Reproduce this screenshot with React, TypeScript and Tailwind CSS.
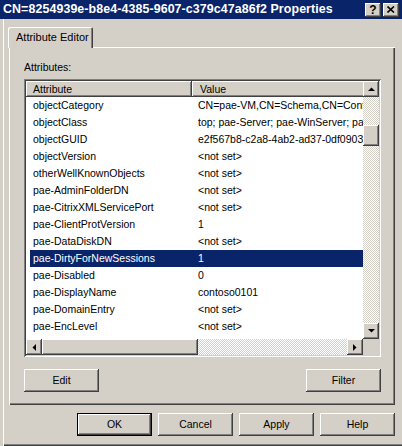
import React from 'react'

// classic 3D bevels
const raised = 'shadow-[inset_-1px_-1px_#404040,inset_1px_1px_#ffffff,inset_-2px_-2px_#808080,inset_2px_2px_#d4d0c8]'
const sunken = 'shadow-[inset_1px_1px_#808080,inset_-1px_-1px_#ffffff,inset_2px_2px_#404040,inset_-2px_-2px_#d4d0c8]'
const checker = 'bg-[repeating-conic-gradient(#ffffff_0%_25%,#d4d0c8_0%_50%)] bg-[length:2px_2px]'

const rows: [string, string][] = [
  ['objectCategory', 'CN=pae-VM,CN=Schema,CN=Configuration,DC=contoso,DC=com'],
  ['objectClass', 'top; pae-Server; pae-WinServer; pae-VM'],
  ['objectGUID', 'e2f567b8-c2a8-4ab2-ad37-0df09038b1c4'],
  ['objectVersion', '<not set>'],
  ['otherWellKnownObjects', '<not set>'],
  ['pae-AdminFolderDN', '<not set>'],
  ['pae-CitrixXMLServicePort', '<not set>'],
  ['pae-ClientProtVersion', '1'],
  ['pae-DataDiskDN', '<not set>'],
  ['pae-DirtyForNewSessions', '1'],
  ['pae-Disabled', '0'],
  ['pae-DisplayName', 'contoso0101'],
  ['pae-DomainEntry', '<not set>'],
  ['pae-EncLevel', '<not set>'],
  ['pae-EncType', '<not set>'],
]

type Dir = 'up' | 'down' | 'left' | 'right'

function Arrow({ dir }: { dir: Dir }) {
  const pts = {
    up: '0,4 7,4 3.5,0.5',
    down: '0,0 7,0 3.5,3.5',
    left: '4,0 4,7 0.5,3.5',
    right: '0,0 0,7 3.5,3.5',
  }[dir]
  const vertical = dir === 'up' || dir === 'down'
  return (
    <svg width={vertical ? 7 : 4} height={vertical ? 4 : 7} viewBox={vertical ? '0 0 7 4' : '0 0 4 7'}>
      <polygon points={pts} fill="#000" />
    </svg>
  )
}

function ScrollButton({ dir }: { dir: Dir }) {
  return (
    <div className={`w-[16px] h-[16px] shrink-0 bg-[#d4d0c8] flex items-center justify-center ${raised}`}>
      <Arrow dir={dir} />
    </div>
  )
}

function Button({ label, isDefault }: { label: string; isDefault?: boolean }) {
  if (isDefault) {
    return (
      <div className="w-[75px] h-[23px] border border-black">
        <div className={`w-full h-full flex items-center justify-center ${raised}`}>{label}</div>
      </div>
    )
  }
  return <div className={`w-[75px] h-[23px] flex items-center justify-center ${raised}`}>{label}</div>
}

export default function App() {
  return (
    <div className="relative w-[402px] h-[446px] bg-[#d4d0c8] overflow-hidden font-['Liberation_Sans',Arial,sans-serif] text-[10.5px] text-black leading-none shadow-[inset_0_-1px_#404040,inset_0_-2px_#808080]">
      {/* title bar */}
      <div className="h-[19px] bg-[#0a246a] flex items-center pl-[3px] pr-[3px]">
        <span className="text-white font-bold text-[12.4px] tracking-[0.1px] flex-1 whitespace-nowrap">
          CN=8254939e-b8e4-4385-9607-c379c47a86f2 Properties
        </span>
        <div className={`w-[16px] h-[14px] bg-[#d4d0c8] flex items-center justify-center font-bold text-[12px] ${raised}`}>?</div>
        <div className={`w-[16px] h-[14px] ml-[2px] bg-[#d4d0c8] flex items-center justify-center ${raised}`}>
          <svg width="8" height="7" viewBox="0 0 8 7">
            <path d="M0.5 0.5 L7 6.5 M7 0.5 L0.5 6.5" stroke="#000" strokeWidth="1.6" />
          </svg>
        </div>
      </div>

      {/* client area, with the frame's light edge on the left */}
      <div className="pl-[8px] pt-[8px] h-[427px] shadow-[inset_3px_0_#d4d0c8,inset_4px_0_#ffffff]">
        {/* tab strip */}
        <div className="flex">
          <div className="relative z-10 -mb-[1px] w-[85px] h-[21px] bg-[#d4d0c8] rounded-t-[2px] flex items-center pl-[8px] pb-[1px] text-[11px] shadow-[inset_1px_1px_#ffffff,inset_-1px_0_#404040,inset_-2px_0_#808080]">
            Attribute Editor
          </div>
        </div>

        {/* tab page */}
        <div className="ml-[1px] w-[386px] h-[358px] pl-[15px] pt-[13px] shadow-[inset_1px_1px_#ffffff,inset_-1px_-1px_#404040,inset_-2px_-2px_#808080]">
          <div className="h-[14px] flex items-center">Attributes:</div>

          {/* list view */}
          <div className={`mt-[5px] w-[357px] h-[278px] p-[2px] bg-white ${sunken}`}>
            <div className="flex h-[258px]">
              <div className="w-[337px] h-full overflow-hidden">
                <div className="flex h-[16px] w-[520px] bg-[#d4d0c8]">
                  <div className={`w-[166px] h-full flex items-center pl-[7px] ${raised}`}>Attribute</div>
                  <div className={`flex-1 h-full flex items-center pl-[8px] ${raised}`}>Value</div>
                </div>
                {rows.map(([name, value], i) => {
                  const selected = i === 9
                  return (
                    <div key={name} className="h-[17px] pl-[4px] flex">
                      <div className={`flex-1 flex items-center whitespace-nowrap ${selected ? 'bg-[#0a246a] text-white' : ''}`}>
                        <div className="w-[162px] pl-[3px] shrink-0">{name}</div>
                        <div className="pl-[6px]">{value}</div>
                      </div>
                    </div>
                  )
                })}
              </div>
              {/* vertical scrollbar */}
              <div className={`w-[16px] h-full flex flex-col ${checker}`}>
                <ScrollButton dir="up" />
                <div className="h-[28px]" />
                <div className={`h-[21px] bg-[#d4d0c8] ${raised}`} />
                <div className="flex-1" />
                <ScrollButton dir="down" />
              </div>
            </div>
            {/* horizontal scrollbar */}
            <div className="flex h-[16px]">
              <div className={`w-[337px] h-full flex ${checker}`}>
                <ScrollButton dir="left" />
                <div className={`w-[156px] h-full bg-[#d4d0c8] ${raised}`} />
                <div className="flex-1" />
                <ScrollButton dir="right" />
              </div>
              <div className="w-[16px] h-full bg-[#d4d0c8]" />
            </div>
          </div>

          <div className="mt-[12px] w-[357px] flex justify-between">
            <Button label="Edit" />
            <Button label="Filter" />
          </div>
        </div>

        {/* dialog buttons */}
        <div className="mt-[8px] w-[387px] flex justify-end gap-[6px]">
          <Button label="OK" isDefault />
          <Button label="Cancel" />
          <Button label="Apply" />
          <Button label="Help" />
        </div>
      </div>
    </div>
  )
}
